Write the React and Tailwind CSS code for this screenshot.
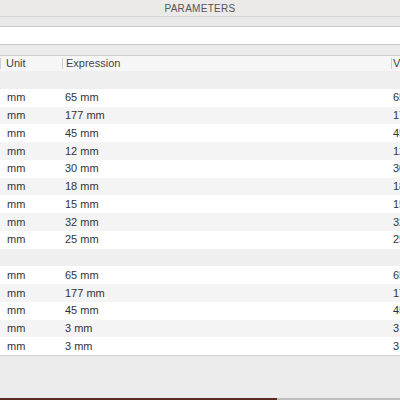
import React from "react";

const groups = [
  ["65", "177", "45", "12", "30", "18", "15", "32", "25"],
  ["65", "177", "45", "3", "3"],
];

function Row({ v, odd }) {
  return (
    <div className={`flex h-[17.75px] items-center ${odd ? "bg-[#f4f4f4]" : "bg-white"}`}>
      <div className="w-[62px] pl-[7px]">mm</div>
      <div className="flex-1 pl-[3px]">{v} mm</div>
      <div className="w-[9px] overflow-hidden whitespace-nowrap pl-[2px]">{v}.00 mm</div>
    </div>
  );
}

export default function App() {
  return (
    <div
      className="flex h-[400px] w-[400px] flex-col overflow-hidden bg-[#ececec] text-[11px] text-[#333]"
      style={{ fontFamily: '"Liberation Sans", Arial, sans-serif' }}
    >
      {/* title */}
      <div className="flex h-[17px] shrink-0 items-center justify-center border-b border-[#d6d6d6] bg-[#ebeae9] text-[10px] tracking-[0.3px] text-[#555]">
        PARAMETERS
      </div>
      <div className="h-[10px] shrink-0 border-b border-[#c9c9c9] bg-[#e9e9e9]" />
      {/* search field */}
      <div className="h-[18px] shrink-0 border-b border-[#c6c6c6] bg-white" />
      <div className="h-[11px] shrink-0 border-b border-[#cfcfcf] bg-[#ebebeb]" />

      {/* header */}
      <div className="flex h-[15px] shrink-0 items-center bg-[#f6f6f6] text-[#444]">
        <div className="w-[62px] border-l border-[#cfcfcf] pl-[5px] leading-[11px]">Unit</div>
        <div className="flex-1 border-l border-[#cfcfcf] pl-[3px] leading-[11px]">Expression</div>
        <div className="w-[9px] overflow-hidden border-l border-[#cfcfcf] pl-[1px] leading-[11px]">Value</div>
      </div>

      {groups.map((g, gi) => (
        <div key={gi} className="shrink-0">
          <div className="h-[17.75px] bg-[#efefef]" />
          {g.map((v, i) => (
            <Row key={i} v={v} odd={i % 2 === 1} />
          ))}
        </div>
      ))}
      <div className="shrink-0 border-t border-[#d3d3d3]" />

      <div className="flex-1" />
      <div className="flex h-[2px] shrink-0">
        <div className="w-[277px] bg-[#5b2a22]" />
        <div className="flex-1 bg-[#bdbdbd]" />
      </div>
    </div>
  );
}
